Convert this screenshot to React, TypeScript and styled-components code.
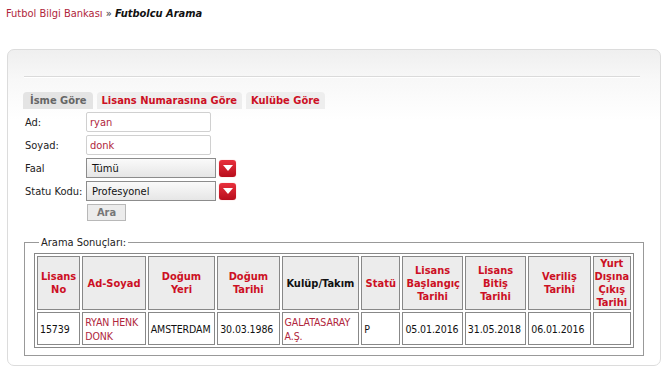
import styled, { createGlobalStyle } from "styled-components";

const GlobalStyle = createGlobalStyle`
  body {
    margin: 0;
    background: #fff;
    font-family: Tahoma, "DejaVu Sans Condensed", "DejaVu Sans", sans-serif;
    font-size: 11px;
    color: #000;
  }
`;

const RED = "#cc1024";
const LINK = "#b0263c";

const columns = [
  { title: "Lisans No", width: 43 },
  { title: "Ad-Soyad", width: 63 },
  { title: "Doğum Yeri", width: 67 },
  { title: "Doğum Tarihi", width: 62 },
  { title: "Kulüp/Takım", width: 77, dark: true },
  { title: "Statü", width: 39 },
  { title: "Lisans Başlangıç Tarihi", width: 60 },
  { title: "Lisans Bitiş Tarihi", width: 61 },
  { title: "Veriliş Tarihi", width: 62 },
  { title: "Yurt Dışına Çıkış Tarihi", width: 38, tight: true },
];

const row = [
  { text: "15739" },
  { text: "RYAN HENK DONK", red: true },
  { text: "AMSTERDAM" },
  { text: "30.03.1986" },
  { text: "GALATASARAY A.Ş.", red: true },
  { text: "P" },
  { text: "05.01.2016" },
  { text: "31.05.2018" },
  { text: "06.01.2016" },
  { text: "" },
];

const DropArrow = () => (
  <ArrowBox>
    <svg width="10" height="6" viewBox="0 0 10 6">
      <path d="M0 0 H10 L5 6 Z" fill="#fff" />
    </svg>
  </ArrowBox>
);

export default function App() {
  return (
    <>
      <GlobalStyle />
      <Breadcrumb>
        <Crumb>Futbol Bilgi Bankası</Crumb> <Sep>»</Sep> <Current>Futbolcu Arama</Current>
      </Breadcrumb>

      <Panel>
        <Divider />
        <Tabs>
          <Tab $active>İsme Göre</Tab>
          <Tab>Lisans Numarasına Göre</Tab>
          <Tab>Kulübe Göre</Tab>
        </Tabs>

        <Form>
          <Label>Ad:</Label>
          <TextInput defaultValue="ryan" />
          <Label>Soyad:</Label>
          <TextInput defaultValue="donk" />
          <Label>Faal</Label>
          <SelectRow>
            <SelectBox>Tümü</SelectBox>
            <DropArrow />
          </SelectRow>
          <Label>Statu Kodu:</Label>
          <SelectRow>
            <SelectBox>Profesyonel</SelectBox>
            <DropArrow />
          </SelectRow>
          <span />
          <div>
            <Button>Ara</Button>
          </div>
        </Form>

        <Results>
          <Legend>Arama Sonuçları:</Legend>
          <Table>
            <colgroup>
              {columns.map((c) => (
                <col key={c.title} style={{ width: c.width }} />
              ))}
            </colgroup>
            <thead>
              <tr>
                {columns.map((c) => (
                  <Th key={c.title} $dark={c.dark} $tight={c.tight}>
                    {c.title}
                  </Th>
                ))}
              </tr>
            </thead>
            <tbody>
              <tr>
                {row.map((cell, i) => (
                  <Td key={i} $red={cell.red}>
                    {cell.text}
                  </Td>
                ))}
              </tr>
            </tbody>
          </Table>
        </Results>
      </Panel>
    </>
  );
}

const Breadcrumb = styled.div`
  padding: 7px 6px 0;
  height: 17px;
  font-size: 11px;
`;
const Crumb = styled.span`
  color: ${LINK};
`;
const Sep = styled.span`
  color: #333;
`;
const Current = styled.span`
  font-weight: bold;
  font-style: italic;
  color: #111;
`;

const Panel = styled.div`
  margin: 25px 0 0 7px;
  width: 654px;
  height: 317px;
  box-sizing: border-box;
  border: 1px solid #dcdcdc;
  border-radius: 7px;
  background: linear-gradient(#efefef, #f8f8f8 30px, #fff 70px);
  padding-top: 26px;
`;

const Divider = styled.div`
  margin: 0 20px 0 16px;
  border-top: 1px solid #dadada;
  border-bottom: 1px solid #fff;
`;

const Tabs = styled.div`
  display: flex;
  gap: 4px;
  margin: 14px 0 0 15px;
`;

const Tab = styled.div<{ $active?: boolean }>`
  height: 17px;
  line-height: 17px;
  padding: ${(p) => (p.$active ? "0 6px 0 7px" : "0 5px")};
  border-radius: 4px 4px 0 0;
  font-weight: bold;
  font-size: 11px;
  background: ${(p) => (p.$active ? "#e4e4e4" : "#eeeeee")};
  color: ${(p) => (p.$active ? "#666" : RED)};
`;

const Form = styled.div`
  display: grid;
  grid-template-columns: 61px auto;
  row-gap: 3px;
  margin: 3px 0 0 17px;
  align-items: center;
`;

const Label = styled.span`
  color: #222;
  font-size: 11px;
`;

const TextInput = styled.input`
  width: 125px;
  height: 20px;
  box-sizing: border-box;
  border: 1px solid #d0d0d0;
  border-radius: 2px;
  padding: 0 3px;
  font: 11px Tahoma, "DejaVu Sans Condensed", "DejaVu Sans", sans-serif;
  color: ${LINK};
  background: #fff;
  outline: none;
`;

const SelectRow = styled.div`
  display: flex;
  align-items: center;
  gap: 3px;
`;

const SelectBox = styled.div`
  width: 130px;
  height: 20px;
  box-sizing: border-box;
  border: 1px solid #8c8c8c;
  padding: 0 5px;
  line-height: 19px;
  font-size: 11px;
  color: #111;
  background: linear-gradient(#fafafa, #e6e6e6);
`;

const ArrowBox = styled.div`
  width: 17px;
  height: 17px;
  border-radius: 3px;
  background: linear-gradient(#e8303c, #b80d1c);
  display: flex;
  align-items: center;
  justify-content: center;
  box-shadow: 0 0 1px #e88;
`;

const Button = styled.button`
  width: 39px;
  height: 17px;
  margin-left: 1px;
  padding: 0;
  border: 1px solid #b8b8b8;
  background: #ececec;
  color: #777;
  font: bold 11px Tahoma, "DejaVu Sans Condensed", "DejaVu Sans", sans-serif;
`;

const Results = styled.fieldset`
  margin: 15px 0 0 16px;
  width: 620px;
  box-sizing: border-box;
  border: 1px solid #999;
  padding: 4px 9px 7px 9px;
`;

const Legend = styled.legend`
  padding: 0 2px;
  margin-left: 5px;
  font-size: 11px;
  color: #222;
`;

const Table = styled.table`
  table-layout: fixed;
  width: 600px;
  border: 1px solid #888;
  border-spacing: 2px;
  font-size: 11px;
`;

const Th = styled.th<{ $dark?: boolean; $tight?: boolean }>`
  border: 1px solid #888;
  background: #ececec;
  color: ${(p) => (p.$dark ? "#111" : RED)};
  font-weight: bold;
  height: 52px;
  padding: ${(p) => (p.$tight ? "0" : "0 3px")};
  line-height: 13px;
  text-align: center;
  vertical-align: middle;
`;

const Td = styled.td<{ $red?: boolean }>`
  border: 1px solid #888;
  background: #fff;
  color: ${(p) => (p.$red ? LINK : "#111")};
  height: 31px;
  padding: 0 1px 0 2px;
  font-size: 10.5px;
  letter-spacing: -0.1px;
  line-height: 14px;
  text-align: left;
  vertical-align: middle;
  white-space: normal;
`;
